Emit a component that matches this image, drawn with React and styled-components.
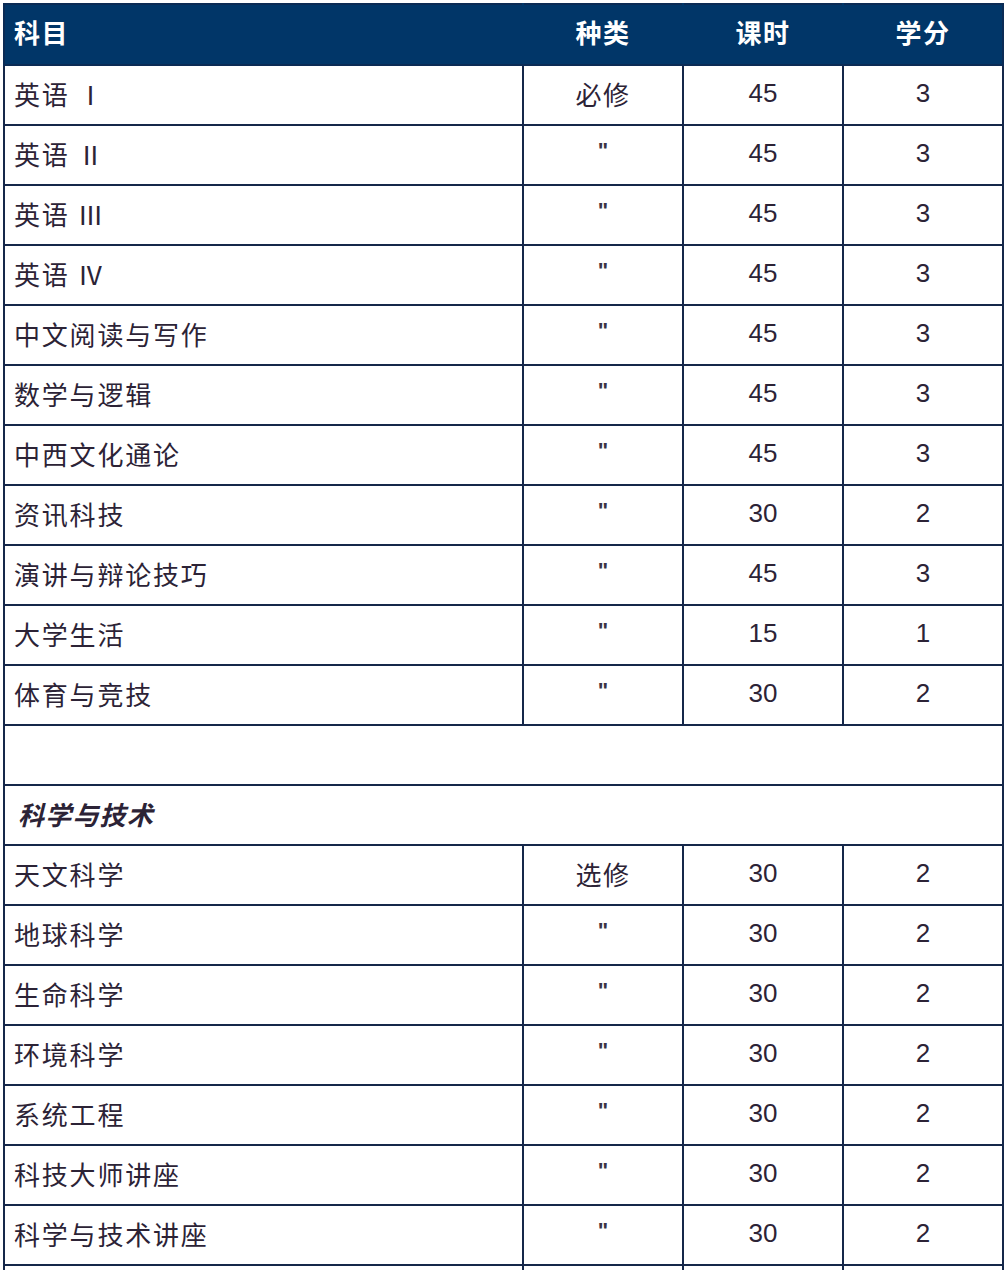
import React from 'react';
import styled, { createGlobalStyle } from 'styled-components';

const GlobalStyle = createGlobalStyle`
  html, body {
    margin: 0;
    padding: 0;
    background: #ffffff;
  }
  body {
    font-family: 'Liberation Sans', 'Noto Sans CJK SC', sans-serif;
  }
`;

const required = [
  ['英语', 'Ⅰ', '必修', '45', '3'],
  ['英语', 'Ⅱ', '"', '45', '3'],
  ['英语', 'Ⅲ', '"', '45', '3'],
  ['英语', 'Ⅳ', '"', '45', '3'],
  ['中文阅读与写作', '', '"', '45', '3'],
  ['数学与逻辑', '', '"', '45', '3'],
  ['中西文化通论', '', '"', '45', '3'],
  ['资讯科技', '', '"', '30', '2'],
  ['演讲与辩论技巧', '', '"', '45', '3'],
  ['大学生活', '', '"', '15', '1'],
  ['体育与竞技', '', '"', '30', '2'],
];

const science = [
  ['天文科学', '', '选修', '30', '2'],
  ['地球科学', '', '"', '30', '2'],
  ['生命科学', '', '"', '30', '2'],
  ['环境科学', '', '"', '30', '2'],
  ['系统工程', '', '"', '30', '2'],
  ['科技大师讲座', '', '"', '30', '2'],
  ['科学与技术讲座', '', '"', '30', '2'],
  ['', '', '', '', ''],
];

function App() {
  const renderRow = (row, i) => (
    <Row key={row[0] + row[1] + i}>
      <NameCell>
        {row[0]}
        {row[1] && <Numeral>{row[1]}</Numeral>}
      </NameCell>
      {row.slice(2).map((v, j) =>
        v === '"' ? (
          <Cell key={j}><Ditto>"</Ditto></Cell>
        ) : (
          <Cell key={j} $cjk={j === 0}>{v}</Cell>
        )
      )}
    </Row>
  );

  return (
    <>
      <GlobalStyle />
      <Page>
        <Table>
          <colgroup>
            <col style={{ width: 519 }} />
            <col style={{ width: 160 }} />
            <col style={{ width: 160 }} />
            <col style={{ width: 160 }} />
          </colgroup>
          <thead>
            <HeadRow>
              <HeadCell $left>科目</HeadCell>
              <HeadCell>种类</HeadCell>
              <HeadCell>课时</HeadCell>
              <HeadCell>学分</HeadCell>
            </HeadRow>
          </thead>
          <tbody>
            {required.map(renderRow)}
            <Row>
              <SpanCell colSpan={4} />
            </Row>
            <Row>
              <SectionCell colSpan={4}>科学与技术</SectionCell>
            </Row>
            {science.map(renderRow)}
          </tbody>
        </Table>
      </Page>
    </>
  );
}

const Page = styled.div`
  padding: 3px 0 0 3px;
  height: 1270px;
  overflow: hidden;
  box-sizing: border-box;
`;

const Table = styled.table`
  width: 1000px;
  border-collapse: collapse;
  table-layout: fixed;
  font-size: 26px;
  color: #2c2336;
`;

const HeadRow = styled.tr`
  height: 61px;
  background: #013668;
`;

const HeadCell = styled.th`
  border: 2px solid #0b2b55;
  border-left-color: ${p => (p.$left ? '#0b2b55' : '#013668')};
  border-right-color: #013668;
  color: #ffffff;
  font-weight: 700;
  font-size: 26px;
  letter-spacing: 1.5px;
  text-align: ${p => (p.$left ? 'left' : 'center')};
  padding: 0 9px 6px;
  &:last-child {
    border-right-color: #0b2b55;
  }
`;

const Row = styled.tr`
  height: 60px;
`;

const Cell = styled.td`
  border: 2px solid #15284a;
  text-align: center;
  vertical-align: middle;
  padding: 0 10px 4px;
  letter-spacing: ${p => (p.$cjk ? '1.5px' : '0')};
`;

const NameCell = styled(Cell)`
  text-align: left;
  padding-left: 9px;
  letter-spacing: 1.8px;
`;

const Numeral = styled.span`
  letter-spacing: 0;
  margin-left: 8px;
`;

const SpanCell = styled(Cell)``;

const SectionCell = styled(Cell)`
  text-align: left;
  padding-left: 13px;
  font-weight: 700;
  font-style: italic;
  letter-spacing: 1.2px;
`;

const Ditto = styled.span`
  display: inline-block;
  font-size: 22px;
  font-weight: 700;
  color: #3a3344;
  transform: translateY(-4px);
`;

export default App;
